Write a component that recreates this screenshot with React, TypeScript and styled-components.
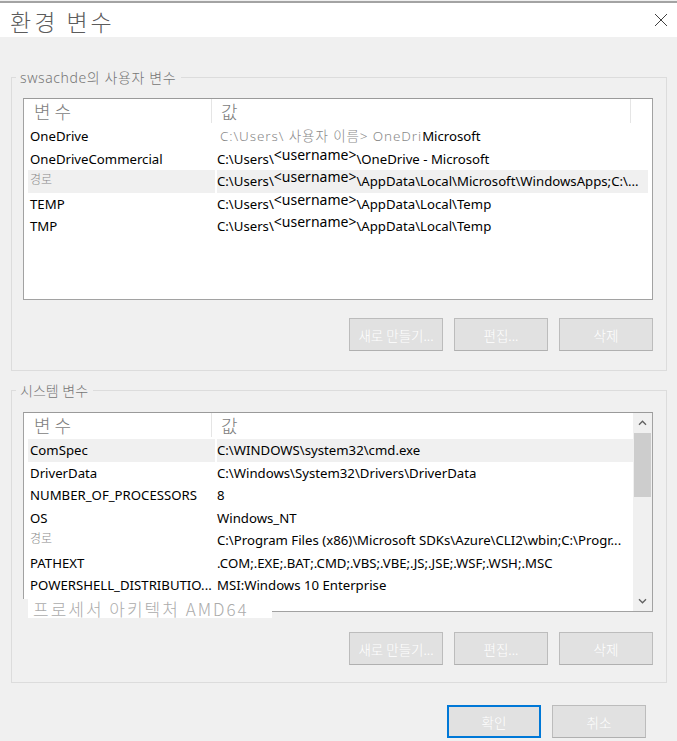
import React from 'react';
import styled, { createGlobalStyle } from 'styled-components';

const GlobalStyle = createGlobalStyle`
  html, body {
    margin: 0;
    padding: 0;
    background: #ffffff;
  }
  body {
    font-family: "Noto Sans", "Noto Sans CJK KR", sans-serif;
  }
`;

type Row = {
  name: React.ReactNode;
  value: React.ReactNode;
  faded?: boolean;
  selected?: boolean;
};

const Window = styled.div`
  width: 677px;
  height: 741px;
  overflow: hidden;
  display: flex;
  flex-direction: column;
  background: #f0f0f0;
`;

const TitleBar = styled.div`
  height: 36px;
  margin-top: 1px;
  border-top: 2px solid #a3a3a3;
  background: #ffffff;
  display: flex;
  align-items: center;
  justify-content: space-between;
  padding: 2px 9px 0 10px;
  box-sizing: border-box;
`;

const Title = styled.h1`
  margin: 0;
  font-family: "Noto Sans CJK KR", sans-serif;
  font-weight: 300;
  font-size: 23px;
  line-height: 28px;
  color: #5c5c5c;
  letter-spacing: 3px;
`;

const CloseButton = styled.div`
  width: 14px;
  height: 14px;
  display: flex;
  margin-top: -3px;
`;

const Body = styled.div`
  flex: 1;
  display: flex;
  flex-direction: column;
  padding: 40px 10px 0 11px;
`;

const GroupBox = styled.div<{ $top: number; $bottom: number; $gap?: number }>`
  position: relative;
  border: 1px solid #dcdcdc;
  padding: ${(p) => p.$top}px 13px ${(p) => p.$bottom}px 11px;
  margin-top: ${(p) => p.$gap ?? 0}px;
`;

const Legend = styled.span<{ $size: number; $spacing: number; $lift: number }>`
  position: absolute;
  left: 4px;
  top: ${(p) => -p.$lift}px;
  padding: 0 5px 0 4px;
  background: #f0f0f0;
  font-family: "Noto Sans", "Noto Sans CJK KR", sans-serif;
  font-weight: 300;
  font-size: ${(p) => p.$size}px;
  line-height: ${(p) => Math.round(p.$size * 1.2)}px;
  letter-spacing: ${(p) => p.$spacing}px;
  color: #767676;
  white-space: nowrap;
`;

const ListWrap = styled.div`
  position: relative;
`;

const ListBox = styled.div<{ $height: number }>`
  height: ${(p) => p.$height}px;
  box-sizing: border-box;
  border: 1px solid #a2a2a2;
  border-top-color: #9a9a9a;
  background: #ffffff;
  display: flex;
  overflow: hidden;
`;

const ListContent = styled.div`
  flex: 1;
  display: flex;
  flex-direction: column;
  min-width: 0;
`;

const Header = styled.div`
  height: 26px;
  display: grid;
  grid-template-columns: 188px 419px 1fr;
  flex-shrink: 0;
`;

const HeaderCell = styled.div<{ $pad: number; $divider?: boolean }>`
  padding-left: ${(p) => p.$pad}px;
  height: 24px;
  border-right: ${(p) => (p.$divider ? '1px solid #e5e5e5' : 'none')};
  font-family: "Noto Sans CJK KR", sans-serif;
  font-weight: 300;
  font-size: 18px;
  line-height: 24px;
  color: #7d7d7d;
  letter-spacing: 4px;
  white-space: nowrap;
  overflow: hidden;
`;

const RowLine = styled.div<{ $right: number }>`
  height: 22.5px;
  margin: 0 ${(p) => p.$right}px 0 4px;
  display: grid;
  grid-template-columns: 187px 1fr;
  column-gap: 2px;
  flex-shrink: 0;
`;

const NameCell = styled.div<{ $selected?: boolean; $faded?: boolean }>`
  padding-left: 2px;
  background: ${(p) => (p.$selected ? '#f0f0f0' : 'transparent')};
  font-family: ${(p) => (p.$faded ? '"Noto Sans CJK KR", sans-serif' : '"Noto Sans", sans-serif')};
  font-weight: ${(p) => (p.$faded ? 300 : 400)};
  font-size: ${(p) => (p.$faded ? 12 : 13.2)}px;
  line-height: ${(p) => (p.$faded ? '18px' : '22.5px')};
  color: ${(p) => (p.$faded ? '#8a8a8a' : '#000000')};
  white-space: nowrap;
  overflow: hidden;
`;

const ValueCell = styled.div<{ $selected?: boolean }>`
  background: ${(p) => (p.$selected ? '#f0f0f0' : 'transparent')};
  font-size: 13.2px;
  line-height: 22.5px;
  color: #000000;
  white-space: nowrap;
  min-width: 0;
`;

const Faded = styled.span`
  margin-left: 3px;
  color: #8a8a8a;
  font-family: "Noto Sans", "Noto Sans CJK KR", sans-serif;
  font-weight: 300;
  font-size: 13.5px;
  letter-spacing: 0.9px;
`;

const Raised = styled.span`
  display: inline-block;
  line-height: 14px;
  vertical-align: 4px;
  font-size: 14px;
`;

const Scrollbar = styled.div`
  width: 19px;
  flex-shrink: 0;
  background: #f0f0f0;
  display: flex;
  flex-direction: column;
  align-items: center;
`;

const Arrow = styled.div`
  height: 20px;
  width: 19px;
  display: flex;
  align-items: center;
  justify-content: center;
  flex-shrink: 0;
`;

const Thumb = styled.div`
  width: 17px;
  height: 64px;
  background: #cdcdcd;
`;

const Track = styled.div`
  flex: 1;
`;

const Stamp = styled.div`
  position: absolute;
  left: -1px;
  top: 187px;
  width: 250px;
  height: 19px;
  padding-left: 11px;
  box-sizing: border-box;
  background: linear-gradient(to right, #f0f0f0 0 6px, #ffffff 6px);
  font-family: "Noto Sans CJK KR", sans-serif;
  font-weight: 300;
  font-size: 17px;
  line-height: 19px;
  letter-spacing: 2px;
  color: #ababab;
  white-space: nowrap;
`;

const ButtonRow = styled.div<{ $gap: number }>`
  display: flex;
  justify-content: flex-end;
  gap: 11px;
  margin-top: ${(p) => p.$gap}px;
`;

const Footer = styled.div`
  display: flex;
  justify-content: flex-end;
  gap: 11px;
  padding: 22px 21px 0 0;
`;

const Button = styled.button<{ $primary?: boolean }>`
  width: 94px;
  height: 33px;
  box-sizing: border-box;
  background: #e1e1e1;
  border: ${(p) => (p.$primary ? '2px solid #0078d7' : '1px solid #bcbcbc')};
  border-bottom-color: ${(p) => (p.$primary ? '#0078d7' : '#b0b0b0')};
  font-family: "Noto Sans CJK KR", sans-serif;
  font-weight: 300;
  font-size: 13.5px;
  color: #ffffff;
  padding: 0;
  cursor: default;
`;

const userRows: Row[] = [
  {
    name: 'OneDrive',
    value: (
      <>
        <Faded>{'C:\\Users\\ 사용자 이름> OneDri'}</Faded>Microsoft
      </>
    ),
  },
  {
    name: 'OneDriveCommercial',
    value: (
      <>
        {'C:\\Users\\'}
        <Raised>{'<username>'}</Raised>
        {'\\OneDrive - Microsoft'}
      </>
    ),
  },
  {
    name: '경로',
    faded: true,
    selected: true,
    value: (
      <>
        {'C:\\Users\\'}
        <Raised>{'<username>'}</Raised>
        {'\\AppData\\Local\\Microsoft\\WindowsApps;C:\\...'}
      </>
    ),
  },
  {
    name: 'TEMP',
    value: (
      <>
        {'C:\\Users\\'}
        <Raised>{'<username>'}</Raised>
        {'\\AppData\\Local\\Temp'}
      </>
    ),
  },
  {
    name: 'TMP',
    value: (
      <>
        {'C:\\Users\\'}
        <Raised>{'<username>'}</Raised>
        {'\\AppData\\Local\\Temp'}
      </>
    ),
  },
];

const systemRows: Row[] = [
  { name: 'ComSpec', value: 'C:\\WINDOWS\\system32\\cmd.exe', selected: true },
  { name: 'DriverData', value: 'C:\\Windows\\System32\\Drivers\\DriverData' },
  { name: 'NUMBER_OF_PROCESSORS', value: '8' },
  { name: 'OS', value: 'Windows_NT' },
  {
    name: '경로',
    faded: true,
    value: 'C:\\Program Files (x86)\\Microsoft SDKs\\Azure\\CLI2\\wbin;C:\\Progr...',
  },
  { name: 'PATHEXT', value: '.COM;.EXE;.BAT;.CMD;.VBS;.VBE;.JS;.JSE;.WSF;.WSH;.MSC' },
  { name: 'POWERSHELL_DISTRIBUTIO...', value: 'MSI:Windows 10 Enterprise' },
];

function Chevron({ down }: { down?: boolean }) {
  return (
    <svg width="9" height="6" viewBox="0 0 9 6">
      <path
        d={down ? 'M1 1.2 L4.5 4.8 L8 1.2' : 'M1 4.8 L4.5 1.2 L8 4.8'}
        fill="none"
        stroke="#606060"
        strokeWidth="1.3"
      />
    </svg>
  );
}

function VarList({ rows, height, scroll }: { rows: Row[]; height: number; scroll?: boolean }) {
  return (
    <ListBox $height={height}>
      <ListContent>
        <Header>
          <HeaderCell $pad={10} $divider>
            변수
          </HeaderCell>
          <HeaderCell $pad={9} $divider={!scroll}>
            값
          </HeaderCell>
          <div />
        </Header>
        {rows.map((r, i) => (
          <RowLine key={i} $right={scroll ? 0 : 4}>
            <NameCell $selected={r.selected} $faded={r.faded}>
              {r.name}
            </NameCell>
            <ValueCell $selected={r.selected}>{r.value}</ValueCell>
          </RowLine>
        ))}
      </ListContent>
      {scroll && (
        <Scrollbar>
          <Arrow>
            <Chevron />
          </Arrow>
          <Thumb />
          <Track />
          <Arrow>
            <Chevron down />
          </Arrow>
        </Scrollbar>
      )}
    </ListBox>
  );
}

export default function App() {
  return (
    <>
      <GlobalStyle />
      <Window>
        <TitleBar>
          <Title>환경 변수</Title>
          <CloseButton>
            <svg width="14" height="14" viewBox="0 0 14 14">
              <path d="M1 1 L13 13 M13 1 L1 13" stroke="#404040" strokeWidth="1" fill="none" />
            </svg>
          </CloseButton>
        </TitleBar>
        <Body>
          <GroupBox $top={20} $bottom={19}>
            <Legend $size={14} $spacing={0.6} $lift={9}>
              swsachde의 사용자 변수
            </Legend>
            <VarList rows={userRows} height={202} />
            <ButtonRow $gap={18}>
              <Button>새로 만들기...</Button>
              <Button>편집...</Button>
              <Button>삭제</Button>
            </ButtonRow>
          </GroupBox>
          <GroupBox $top={21} $bottom={17} $gap={19}>
            <Legend $size={14} $spacing={0} $lift={9}>
              시스템 변수
            </Legend>
            <ListWrap>
              <VarList rows={systemRows} height={200} scroll />
              <Stamp>프로세서 아키텍처 AMD64</Stamp>
            </ListWrap>
            <ButtonRow $gap={20}>
              <Button>새로 만들기...</Button>
              <Button>편집...</Button>
              <Button>삭제</Button>
            </ButtonRow>
          </GroupBox>
          <Footer>
            <Button $primary>확인</Button>
            <Button>취소</Button>
          </Footer>
        </Body>
      </Window>
    </>
  );
}
